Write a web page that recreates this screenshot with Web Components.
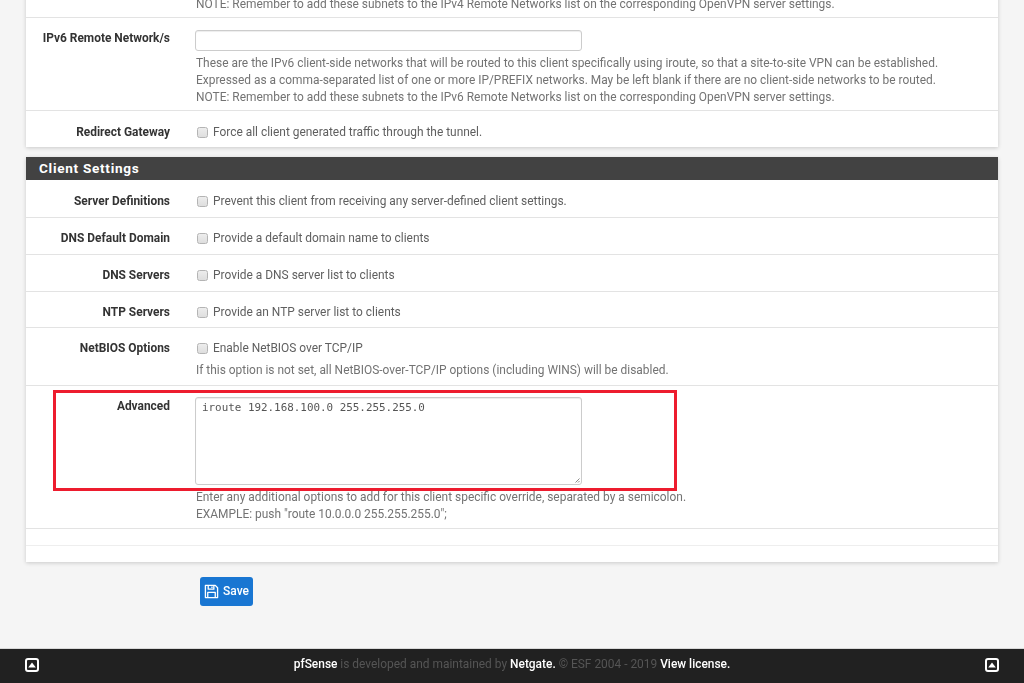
<!DOCTYPE html>
<html lang="en"><head><meta charset="utf-8"><title>pfSense</title>
<style>
html,body{margin:0;padding:0;height:683px;overflow:hidden;background:#f5f5f5}
body{font:11.93px/17px Roboto,"Liberation Sans",sans-serif;color:#737373}
</style></head><body>
<pf-page>
  <pf-panel>
    <pf-row tight><pf-help>NOTE: Remember to add these subnets to the IPv4 Remote Networks list on the corresponding OpenVPN server settings.</pf-help></pf-row>
    <pf-row label="IPv6 Remote Network/s" short>
      <pf-input></pf-input>
      <pf-help>These are the IPv6 client-side networks that will be routed to this client specifically using iroute, so that a site-to-site VPN can be established.<br>Expressed as a comma-separated list of one or more IP/PREFIX networks. May be left blank if there are no client-side networks to be routed.<br>NOTE: Remember to add these subnets to the IPv6 Remote Networks list on the corresponding OpenVPN server settings.</pf-help>
    </pf-row>
    <pf-row label="Redirect Gateway" last drop><pf-check>Force all client generated traffic through the tunnel.</pf-check></pf-row>
  </pf-panel>
  <pf-panel heading="Client Settings">
    <pf-row label="Server Definitions" first><pf-check>Prevent this client from receiving any server-defined client settings.</pf-check></pf-row>
    <pf-row label="DNS Default Domain"><pf-check>Provide a default domain name to clients</pf-check></pf-row>
    <pf-row label="DNS Servers"><pf-check>Provide a DNS server list to clients</pf-check></pf-row>
    <pf-row label="NTP Servers" helped><pf-check>Provide an NTP server list to clients</pf-check></pf-row>
    <pf-row label="NetBIOS Options" helped>
      <pf-check>Enable NetBIOS over TCP/IP</pf-check>
      <pf-help gap>If this option is not set, all NetBIOS-over-TCP/IP options (including WINS) will be disabled.</pf-help>
    </pf-row>
    <pf-row label="Advanced" highlight>
      <pf-textarea>iroute 192.168.100.0 255.255.255.0</pf-textarea>
      <pf-help>Enter any additional options to add for this client specific override, separated by a semicolon.<br>EXAMPLE: push "route 10.0.0.0 255.255.255.0";</pf-help>
    </pf-row>
    <pf-row blank></pf-row>
    <pf-row blank last></pf-row>
  </pf-panel>
  <pf-save>Save</pf-save>
  <pf-footer></pf-footer>
</pf-page>
<script>
function def(name, css, html, setup){
  customElements.define(name, class extends HTMLElement{
    constructor(){super();const r=this.attachShadow({mode:'open'});
      r.innerHTML='<style>'+css+'</style>'+html;}
    connectedCallback(){
      if(setup) setup(this,this.shadowRoot);
    }
  });
}
def('pf-page',
 ':host{display:flex;flex-direction:column;height:691px;margin-top:-8px;filter:blur(.3px)}',
 '<slot></slot>');
def('pf-panel',
 `:host{display:block;margin:0 26px 10px;background:#fff;box-shadow:0 1px 4px rgba(0,0,0,.18)}
  h2{margin:0;background:#424242;color:#fff;font:700 13.6px/23px Roboto,sans-serif;letter-spacing:.7px;padding:0 13px}
  h2:empty{display:none}`,
 '<h2></h2><slot></slot>',
 (el,r)=>{r.querySelector('h2').textContent=el.getAttribute('heading')||''});
def('pf-row',
 `:host{display:grid;grid-template-columns:144px 1fr;column-gap:25px;position:relative;padding:12px 0 7px;border-bottom:1px solid #e3e3e3}
  :host([tight]){padding:0 0 4px}
  :host([short]){padding-bottom:4px}
  :host([first]){padding-top:13px}
  :host([drop]){padding-top:13px;padding-bottom:6px}
  :host([helped]){padding-bottom:6px}
  :host([last]){border-bottom:0}
  :host([blank]){display:block;padding:0;height:16px;border-bottom:1px solid #eee}
  :host([blank][last]){height:16px;border-bottom:0}
  :host([highlight]){padding-bottom:5px}
  .l{font-weight:700;color:#333;text-align:right;line-height:17px}
  .c{min-width:0}
  .box{display:none;position:absolute;left:27px;top:4px;width:618px;height:95px;border:3px solid #ed1c2e;pointer-events:none}
  :host([highlight]) .box{display:block}`,
 '<div class="l"></div><div class="c"><slot></slot></div><div class="box"></div>',
 (el,r)=>{r.querySelector('.l').textContent=el.getAttribute('label')||''});
def('pf-help',
 ':host{display:block;color:#737373;white-space:nowrap;padding-left:1px;margin-top:4px}:host([gap]){margin-top:5px}',
 '<slot></slot>');
def('pf-input',
 `:host{display:block;width:387px;height:21px;box-sizing:border-box;background:#fff;border:1px solid #ccc;border-radius:3px;box-shadow:inset 0 1px 1px rgba(0,0,0,.075);margin-bottom:1px}`,
 '');
def('pf-textarea',
 `:host{display:block;position:relative;width:387px;height:88px;margin-top:-1px;margin-bottom:2px}
  textarea{display:block;resize:none;box-sizing:border-box;width:387px;height:88px;margin:0;padding:3px 6px;border:1px solid #ccc;border-radius:3px;background:#fff;color:#555;font:10.9px/14px "DejaVu Sans Mono",monospace;box-shadow:inset 0 1px 1px rgba(0,0,0,.075);outline:0}
  svg{position:absolute;right:2px;bottom:2px;width:5px;height:5px}`,
 '<textarea spellcheck="false"></textarea><svg viewBox="0 0 5 5"><path d="M4.5 .5 .5 4.5M4.5 3 3 4.5" stroke="#8a8a8a" fill="none"/></svg>',
 (el,r)=>{r.querySelector('textarea').value=el.textContent.trim();});
def('pf-check',
 `:host{display:flex;align-items:center;color:#5f5f5f;height:17px}
  i{display:block;flex:none;box-sizing:border-box;width:11px;height:11px;margin:0 5px 0 2px;border:1px solid #b4b4b4;border-radius:2.5px;background:linear-gradient(#ededed,#dedede)}`,
 '<i></i><span><slot></slot></span>');
def('pf-save',
 `:host{display:inline-flex;align-self:flex-start;align-items:center;box-sizing:border-box;width:53px;height:29px;margin:5px 0 0 200px;padding-left:4px;background:#1976d2;border-radius:3px;color:#fff;font-weight:500;font-size:12px}
  svg{width:15px;height:15px;margin-right:4px;flex:none}`,
 `<svg viewBox="0 0 16 16" fill="none" stroke="#fff" stroke-width="1.4" stroke-linejoin="round"><path d="M1.5 1.5H12L14.5 4V14.5H1.5Z"/><path d="M4.5 1.5V5.5H10.5V1.5M8.5 2.7V4.3"/><path d="M4 14.5V9H12V14.5"/></svg><slot></slot>`);
const up=`<svg viewBox="0 0 14 14"><rect x="1" y="1" width="12" height="12" rx="2" fill="#212121" stroke="#fff" stroke-width="2"/><path d="M3.2 9.6 7 4.4l3.8 5.2Z" fill="#fff"/></svg>`;
def('pf-footer',
 `:host{display:flex;align-items:center;justify-content:space-between;box-sizing:border-box;margin-top:auto;height:35px;padding:0 25px 3px;background:#212121;border-top:1px solid #d8d8d8;color:#555;font-size:11.93px}
  b{color:#fff;font-weight:500}
  svg{width:14px;height:14px;flex:none}`,
 up+`<span><b>pfSense</b> is developed and maintained by <b>Netgate.</b> © ESF 2004 - 2019 <b>View license.</b></span>`+up);
</script>
</body></html>
